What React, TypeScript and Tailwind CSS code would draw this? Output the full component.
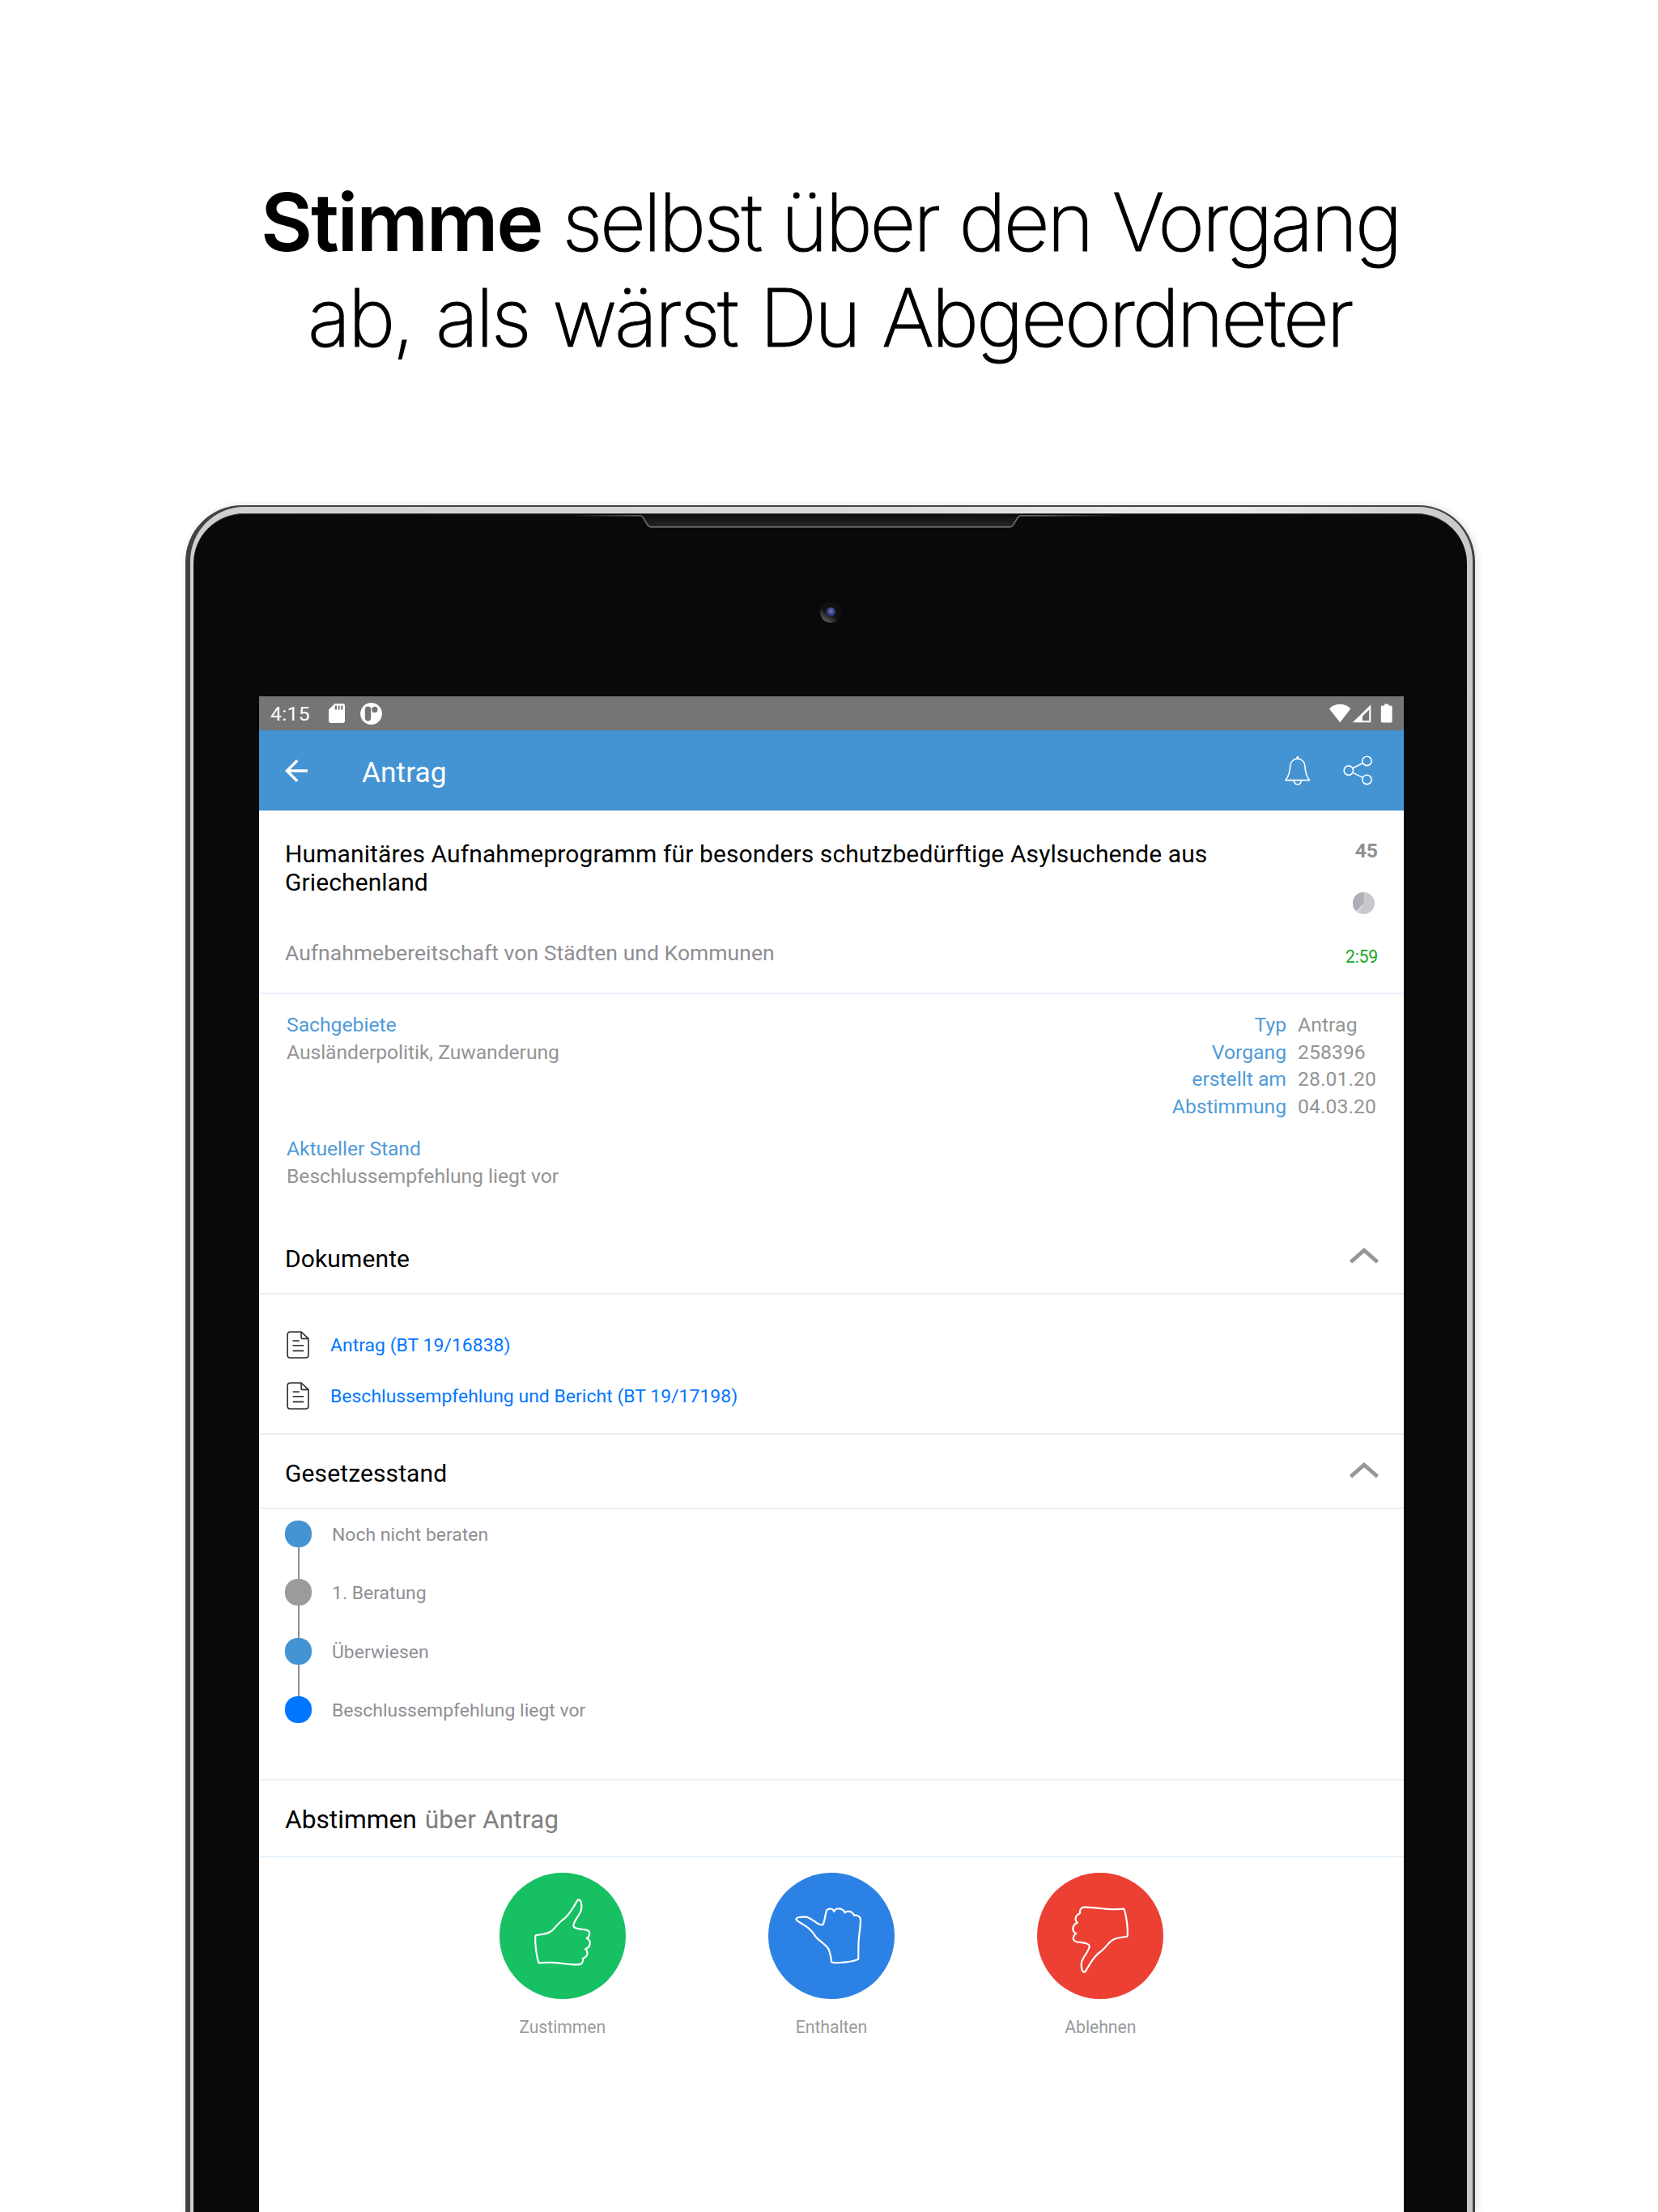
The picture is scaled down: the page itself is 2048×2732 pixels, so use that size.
import React from "react";

const THUMB =
  "M187 300 C215 298 238 290 245 284 C258 272 268 257 282 246 C310 228 324 198 338 174 C342 166 350 168 353 178 C356 192 355 205 352 212 C343 233 327 246 325 264 C324 275 345 278 370 280 C385 283 387 293 383 302 C381 308 377 311 374 312 C385 315 388 327 385 337 C382 347 374 350 369 352 C377 355 378 369 374 376 C369 384 362 384 360 388 C362 400 355 408 347 409 C320 411 290 406 268 403 C245 400 220 402 197 403 C188 380 182 330 184 306 C184 302 185 300 187 300Z";

const THUMB_SIDE =
  "M160 240 C162 234 180 232 195 232 C210 234 225 248 240 257 C250 262 256 264 260 260 C268 245 267 225 273 208 C278 202 290 201 296 205 C299 207 300 210 300 213 C305 204 312 201 320 202 C332 203 338 209 341 217 C346 211 356 211 364 214 C370 218 374 222 375 227 C382 225 395 228 398 238 C401 255 396 280 394 300 C390 325 391 360 391 389 C375 398 320 406 292 401 C289 380 286 355 275 344 C265 333 245 320 232 305 C222 289 210 275 190 263 C175 254 160 247 160 240Z";

function StatusBar() {
  return (
    <div className="flex h-[42px] items-center bg-[#757575] pl-[14px] text-white">
      <span className="w-[72px] pt-0.5 text-[24.7px] leading-[42px] tracking-[0.3px]">4:15</span>
      <svg className="h-[24px] w-[20px]" viewBox="0 0 20 24">
        <path
          fill="#fff"
          fillRule="evenodd"
          d="M7.5 0H17.6Q20 0 20 2.4V21.6Q20 24 17.6 24H2.4Q0 24 0 21.6V7.5ZM7.6 2.6V7.4H10V2.6ZM11.6 2.6V7.4H13.6V2.6ZM15.2 2.6V7.4H17.4V2.6Z"
        />
      </svg>
      <svg className="ml-[19px] size-[27px]" viewBox="0 0 27 27">
        <circle cx="13.5" cy="13.5" r="13.4" fill="#fff" />
        <rect x="5.8" y="4.6" width="7.4" height="17.8" rx="3.6" fill="#757575" />
        <circle cx="17.9" cy="8.4" r="3.6" fill="#757575" />
      </svg>
      <div className="ml-auto flex h-[24px] pr-[14px]">
        <svg className="h-[24px] w-[78px]" viewBox="0 0 78 24">
          <path fill="#fff" d="M13.2 23.2 0 6.4C3.4 2.6 8 .8 13.2 .8S23 2.6 26.2 6.4Z" />
          <path
            fill="#fff"
            fillRule="evenodd"
            d="M51.3 1.2V23.2H28.8ZM49.2 7.5 41 15.5V21H49.2Z"
          />
          <path
            fill="#fff"
            d="M68 .4h5.2V2.4H76q1.6 0 1.6 1.6V21.8q0 1.6-1.6 1.6H65.4q-1.6 0-1.6-1.6V4q0-1.6 1.6-1.6H68Z"
          />
        </svg>
      </div>
    </div>
  );
}

function AppBar() {
  return (
    <div className="flex h-[99px] items-center border-b border-[#3a8bd0] bg-[#4493d3] pl-[25px] pr-[39px] pt-[2px] text-white">
      <svg className="size-[42px]" viewBox="0 0 24 24" fill="#fff">
        <path d="M20 11H7.83l5.59-5.59L12 4l-8 8 8 8 1.41-1.41L7.83 13H20v-2z" />
      </svg>
      <h1 className="ml-[60px] pt-1 text-[35.3px] leading-[40px] tracking-[0.05px]">Antrag</h1>
      <svg
        className="mb-px ml-auto h-[36px] w-[32px]"
        viewBox="0 0 32 36"
        fill="none"
        stroke="#fff"
        strokeWidth="1.6"
        strokeLinejoin="round"
      >
        <path d="M15.8 3C10.6 3.2 7 7 6.7 12C6.4 19 5.6 24 1 29.6H30.6C26 24 25.2 19 24.9 12C24.6 7 21 3.2 15.8 3Z" />
        <path d="M11.2 29.8C11.4 33 13.4 34.8 15.8 34.8S20.2 33 20.4 29.8" />
        <path d="M15.8 3V1.2" strokeWidth="2.6" strokeLinecap="round" />
      </svg>
      <svg
        className="mb-px ml-[40px] h-[37px] w-[36px]"
        viewBox="0 0 36 37"
        fill="none"
        stroke="#fff"
        strokeWidth="1.6"
      >
        <circle cx="6.8" cy="18.6" r="5.7" />
        <circle cx="29.5" cy="6.9" r="5.7" />
        <circle cx="29.5" cy="29.9" r="5.7" />
        <path d="M12 15.8 24.4 9.5M12 21.4 24.4 27.4" />
      </svg>
    </div>
  );
}

function Summary() {
  return (
    <div className="flex h-[227px] justify-between border-b-2 border-[#e8f2fc] pl-[32px] pr-[32px] pt-[36px]">
      <div>
        <p className="w-[1180px] text-[30px] leading-[35.3px] tracking-[0.105px] text-black">
          Humanitäres Aufnahmeprogramm für besonders schutzbedürftige Asylsuchende aus Griechenland
        </p>
        <p className="mt-[53.4px] text-[26.5px] leading-[32px] tracking-[0.038px] text-[#8f8e94]">
          Aufnahmebereitschaft von Städten und Kommunen
        </p>
      </div>
      <div className="flex flex-col items-end">
        <span className="-mt-px text-[24.7px] font-bold leading-[30px] text-[#8f8e94]">45</span>
        <svg className="mr-[4px] mt-[36px] size-[27px]" viewBox="-13.5 -13.5 27 27">
          <circle r="13.5" fill="#c7c7cc" />
          <path d="M0 0V-13.5A13.5 13.5 0 0 0-9.2 9.9Z" fill="#aeaeb6" />
          <path d="M0 0-9.2 9.9A13.5 13.5 0 0 0-6.2 12Z" fill="#d8d8dc" />
        </svg>
        <span className="mt-[38px] text-[21.2px] leading-[30px] tracking-[-0.2px] text-[#15a82b]">2:59</span>
      </div>
    </div>
  );
}

const META: [string, string][] = [
  ["Typ", "Antrag"],
  ["Vorgang", "258396"],
  ["erstellt am", "28.01.20"],
  ["Abstimmung", "04.03.20"],
];

function Info() {
  return (
    <div className="flex h-[284px] justify-between pl-[34px] pr-[31px] pt-[21px] text-[24.7px] leading-[33.5px] text-[#949494]">
      <div className="flex flex-col gap-[86px]">
        <div>
          <p className="text-[#4f9bd9]">Sachgebiete</p>
          <p className="tracking-[-0.06px]">Ausländerpolitik, Zuwanderung</p>
        </div>
        <div>
          <p className="tracking-[-0.06px] text-[#4f9bd9]">Aktueller Stand</p>
          <p className="tracking-[-0.03px]">Beschlussempfehlung liegt vor</p>
        </div>
      </div>
      <div className="grid auto-rows-[33.5px] grid-cols-[auto_100px] gap-x-[14px]">
        {META.map(([label, value]) => (
          <React.Fragment key={label}>
            <span className="text-right text-[#4f9bd9]">{label}</span>
            <span className="tracking-[0.1px]">{value}</span>
          </React.Fragment>
        ))}
      </div>
    </div>
  );
}

function SectionHead({ title }: { title: string }) {
  return (
    <div className="flex items-center justify-between pl-[32px] pr-[31px]">
      <h2 className="text-[30px] leading-[40px] tracking-[0.12px] text-black">{title}</h2>
      <svg className="mb-[8px] h-[20px] w-[36px]" viewBox="0 0 36 20" fill="none">
        <path d="M1.5 17.6 18 3.2 34.5 17.6" stroke="#979797" strokeWidth="4.8" />
      </svg>
    </div>
  );
}

function DocumentRow({ title }: { title: string }) {
  return (
    <div className="flex h-[63.2px] items-center pl-[34px]">
      <svg
        className="mb-px h-[34px] w-[28px]"
        viewBox="-0.8 -0.8 28 34"
        fill="none"
        stroke="#2b2b2b"
        strokeWidth="1.6"
      >
        <path d="M4 .2H17.3L26.2 8.6V28.8Q26.2 32.2 22.8 32.2H3.6Q.3 32.2 .3 28.8V3.8Q.3 .2 4 .2Z" />
        <path d="M17.3 .2V6.6Q17.3 8.6 19.3 8.6H26.2" />
        <path d="M6.8 11.2H15M6.8 16.9H20.4M6.8 23.6H20.4" />
      </svg>
      <a className="ml-[26px] pt-px text-[22.9px] leading-[30px] tracking-[0.05px] text-[#0076ff]">{title}</a>
    </div>
  );
}

function Steps() {
  return (
    <div className="h-[333px] pl-[32px] pt-[14px]">
      <Step dot="bg-[#4493d3]" label="Noch nicht beraten" />
      <Step dot="bg-[#9b9b9b]" label="1. Beratung" />
      <Step dot="bg-[#4493d3]" label="Überwiesen" />
      <Step dot="bg-[#0076ff]" label="Beschlussempfehlung liegt vor" last />
    </div>
  );
}

function Step({ dot, label, last = false }: { dot: string; label: string; last?: boolean }) {
  return (
    <div className="flex h-[72.4px] gap-[25px]">
      <div className="flex w-[33px] flex-col items-center">
        <div className={`size-[33px] shrink-0 rounded-[15.5px] ${dot}`} />
        {!last && <div className="w-[2px] grow bg-[#8f8e94]" />}
      </div>
      <span className="pt-[3px] text-[22.9px] leading-[30px] tracking-[0.03px] text-[#8f8e94]">{label}</span>
    </div>
  );
}

function VoteButton({ color, label, children }: { color: string; label: string; children: React.ReactNode }) {
  return (
    <div className="flex w-[156px] flex-col items-center">
      <div className={`size-[156px] rounded-full ${color}`}>{children}</div>
      <span className="mt-[20px] text-[21.2px] leading-[30px] tracking-[-0.05px] text-[#9b9b9b]">{label}</span>
    </div>
  );
}

function Hand({ d, flip = false }: { d: string; flip?: boolean }) {
  return (
    <svg
      className={flip ? "size-[156px] rotate-180" : "size-[156px]"}
      viewBox="51 69 468 468"
      fill="none"
      stroke="#fff"
      strokeWidth="6.5"
      strokeLinejoin="round"
    >
      <path d={d} />
    </svg>
  );
}

function Screen() {
  return (
    <div className="h-[1872px] w-[1414px] bg-white font-['Roboto',sans-serif]">
      <StatusBar />
      <AppBar />
      <Summary />
      <Info />
      <div className="h-[87px] border-b-2 border-[#eeeef5] pt-[23px]">
        <SectionHead title="Dokumente" />
      </div>
      <div className="h-[173px] border-b-2 border-[#eeeeef] pt-[31px]">
        <DocumentRow title="Antrag (BT 19/16838)" />
        <DocumentRow title="Beschlussempfehlung und Bericht (BT 19/17198)" />
      </div>
      <div className="h-[92px] border-b-2 border-[#eeeef5] pt-[28px]">
        <SectionHead title="Gesetzesstand" />
      </div>
      <Steps />
      <div className="flex h-[97px] items-center gap-[10px] border-b-2 border-t-2 border-b-[#e8f3fc] border-t-[#efeff4] pl-[32px] pt-[5px] text-[31.7px] leading-[40px]">
        <span className="text-black">Abstimmen</span>
        <span className="tracking-[0.1px] text-[#808080]">über Antrag</span>
      </div>
      <div className="flex justify-center gap-[176.3px] pt-[19px]">
        <VoteButton color="bg-[#17c063]" label="Zustimmen">
          <Hand d={THUMB} />
        </VoteButton>
        <VoteButton color="bg-[#2c82e4]" label="Enthalten">
          <svg
            className="size-[156px]"
            viewBox="57 69 468 468"
            fill="none"
            stroke="#fff"
            strokeWidth="6.5"
            strokeLinejoin="round"
          >
            <path d={THUMB_SIDE} />
          </svg>
        </VoteButton>
        <VoteButton color="bg-[#ec4033]" label="Ablehnen">
          <Hand d={THUMB} flip />
        </VoteButton>
      </div>
    </div>
  );
}

function Speaker() {
  return (
    <svg className="block h-[24px] w-[680px]" viewBox="0 0 680 24" fill="none">
      <defs>
        <linearGradient id="edge" x1="0" x2="680" y1="0" y2="0" gradientUnits="userSpaceOnUse">
          <stop offset="0" stopColor="#666" stopOpacity="0" />
          <stop offset="0.14" stopColor="#666" />
          <stop offset="0.84" stopColor="#666" />
          <stop offset="1" stopColor="#666" stopOpacity="0" />
        </linearGradient>
        <linearGradient id="grille" x1="0" x2="0" y1="0" y2="15" gradientUnits="userSpaceOnUse">
          <stop offset="0" stopColor="#0c0c0c" />
          <stop offset="1" stopColor="#262626" />
        </linearGradient>
      </defs>
      <path d="M86 0 97 15H544L555 0Z" fill="url(#grille)" />
      <path
        d="M0 1.9H85Q88 1.9 89.5 4.5L95 13.5Q96.5 15.8 99 15.8H542Q545 15.8 546.5 13.5L552 4.5Q553.5 1.9 557 1.9H680"
        stroke="url(#edge)"
        strokeWidth="1.8"
      />
    </svg>
  );
}

function Camera() {
  return (
    <svg className="size-[26px]" viewBox="0 0 26 26">
      <defs>
        <linearGradient id="glint" x1="0.2" y1="1" x2="0.6" y2="0.4">
          <stop offset="0" stopColor="#6a6a6a" />
          <stop offset="0.7" stopColor="#101010" />
          <stop offset="1" stopColor="#101010" />
        </linearGradient>
        <radialGradient id="lens" cx="0.55" cy="0.4" r="0.6">
          <stop offset="0" stopColor="#7d76b8" />
          <stop offset="0.5" stopColor="#3c4790" />
          <stop offset="1" stopColor="#1a1c3a" />
        </radialGradient>
      </defs>
      <circle cx="13" cy="13" r="13" fill="url(#glint)" />
      <circle cx="13" cy="13" r="6" fill="url(#lens)" />
    </svg>
  );
}

export default function App() {
  return (
    <div className="flex h-[2732px] w-[2048px] flex-col overflow-hidden bg-white">
      <header className="h-[624px] pt-[215px] font-['Inter',sans-serif] text-[98.6px] font-extralight leading-[118px] text-black">
        <div className="flex gap-[25px] whitespace-nowrap pl-[322px]">
          <strong className="font-semibold tracking-[-2.2px]">Stimme</strong>
          <span className="tracking-[-3.1px] [-webkit-text-stroke:1.1px_black] [word-spacing:1px]">
            selbst über den Vorgang
          </span>
        </div>
        <div className="whitespace-nowrap pl-[380px] tracking-[-3.1px] [-webkit-text-stroke:1.1px_black] [word-spacing:4px]">
          ab, als wärst Du Abgeordneter
        </div>
      </header>
      <div className="ml-[229px] h-[2108px] w-[1593px] shrink-0 rounded-t-[70px] bg-[#424242] pl-[6px] pr-[3px] pt-[2px] shadow-[2px_0_10px_rgba(0,0,0,0.12)]">
        <div className="h-full rounded-t-[67px] bg-[linear-gradient(to_right,#cfcfcf,#d8d8d8_50%,#ececec_80%,#c8c8c8)] pl-[4px] pr-[7px] pt-[8px]">
          <div className="h-full rounded-t-[62px] border-t border-[#4a4a4a] bg-[#090909]">
            <div className="flex h-[225px] flex-col">
              <div className="pl-[466px]">
                <Speaker />
              </div>
              <div className="pl-[774px] pt-[84px]">
                <Camera />
              </div>
            </div>
            <div className="pl-[81px]">
              <Screen />
            </div>
          </div>
        </div>
      </div>
    </div>
  );
}
